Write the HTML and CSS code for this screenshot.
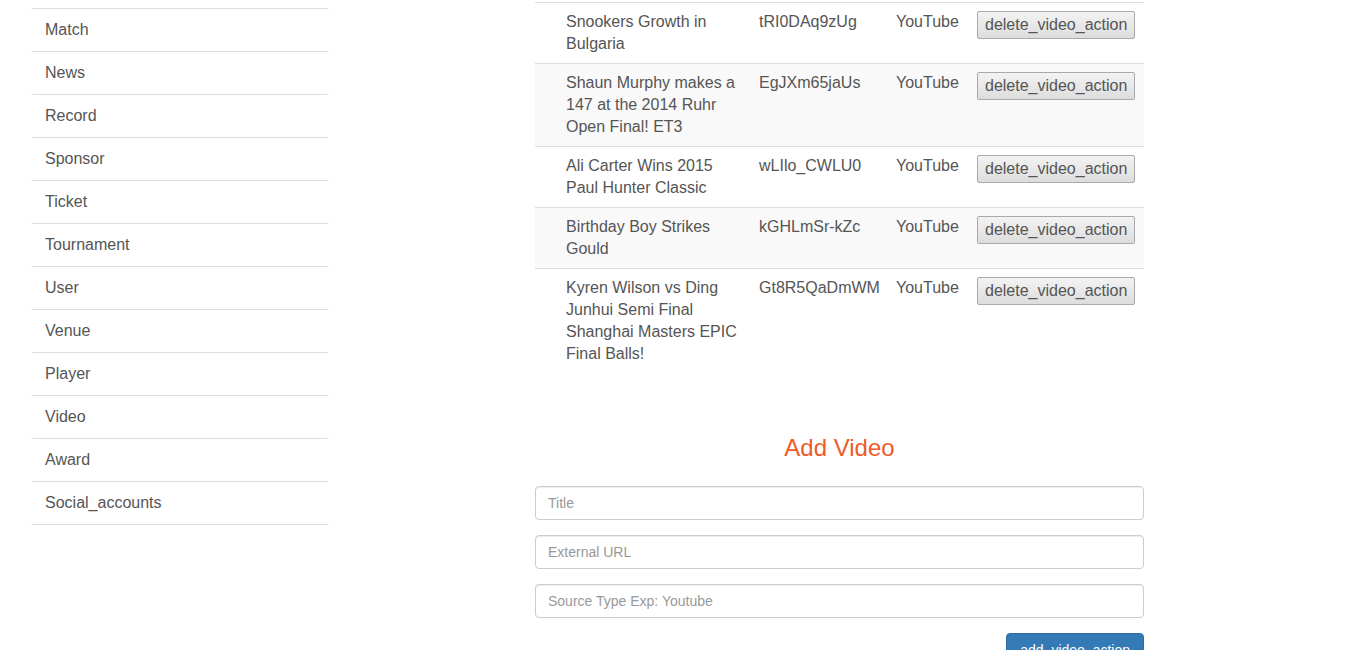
FILE: index.html
```html
<!DOCTYPE html>
<html>
<head>
<meta charset="utf-8">
<link rel="stylesheet" href="styles.css">
</head>
<body>
<div class="page">
  <aside class="sidebar">
    <ul class="nav-list">
      <li class="nav-item">Match</li>
      <li class="nav-item">News</li>
      <li class="nav-item">Record</li>
      <li class="nav-item">Sponsor</li>
      <li class="nav-item">Ticket</li>
      <li class="nav-item">Tournament</li>
      <li class="nav-item">User</li>
      <li class="nav-item">Venue</li>
      <li class="nav-item">Player</li>
      <li class="nav-item">Video</li>
      <li class="nav-item">Award</li>
      <li class="nav-item">Social_accounts</li>
    </ul>
  </aside>
  <main class="content">
    <table class="video-table">
      <colgroup>
        <col class="c-id"><col class="c-title"><col class="c-ext"><col class="c-src"><col class="c-act">
      </colgroup>
      <tbody>
        <tr>
          <td></td>
          <td>Snookers Growth in Bulgaria</td>
          <td>tRI0DAq9zUg</td>
          <td>YouTube</td>
          <td><button class="btn-delete">delete_video_action</button></td>
        </tr>
        <tr class="striped">
          <td></td>
          <td>Shaun Murphy makes a 147 at the 2014 Ruhr Open Final! ET3</td>
          <td>EgJXm65jaUs</td>
          <td>YouTube</td>
          <td><button class="btn-delete">delete_video_action</button></td>
        </tr>
        <tr>
          <td></td>
          <td>Ali Carter Wins 2015 Paul Hunter Classic</td>
          <td>wLIlo_CWLU0</td>
          <td>YouTube</td>
          <td><button class="btn-delete">delete_video_action</button></td>
        </tr>
        <tr class="striped">
          <td></td>
          <td>Birthday Boy Strikes Gould</td>
          <td>kGHLmSr-kZc</td>
          <td>YouTube</td>
          <td><button class="btn-delete">delete_video_action</button></td>
        </tr>
        <tr>
          <td></td>
          <td>Kyren Wilson vs Ding Junhui Semi Final Shanghai Masters EPIC Final Balls!</td>
          <td>Gt8R5QaDmWM</td>
          <td>YouTube</td>
          <td><button class="btn-delete">delete_video_action</button></td>
        </tr>
      </tbody>
    </table>

    <h3 class="form-title">Add Video</h3>
    <form class="add-form">
      <input class="field" type="text" placeholder="Title">
      <input class="field" type="text" placeholder="External URL">
      <input class="field" type="text" placeholder="Source Type Exp: Youtube">
      <div class="actions">
        <button type="button" class="btn-primary">add_video_action</button>
      </div>
    </form>
  </main>
</div>
</body>
</html>
```

FILE: styles.css
```css
* { box-sizing: border-box; }

html, body {
  margin: 0;
  padding: 0;
  background: #fff;
  font-family: "Liberation Sans", Arial, sans-serif;
  color: #555;
  overflow: hidden;
}

.page {
  display: flex;
  align-items: flex-start;
  padding-left: 31px;
}

.sidebar {
  width: 298px;
  flex: 0 0 298px;
  padding-top: 8px;
}

.nav-list {
  list-style: none;
  margin: 0;
  padding: 0;
  border-top: 1px solid #ddd;
  border-radius: 3px;
}

.nav-item {
  padding: 10px 14px;
  font-size: 16px;
  line-height: 22px;
  color: #555;
  border-bottom: 1px solid #ddd;
  border-radius: 3px;
}

.content {
  margin-left: 206px;
  width: 609px;
  flex: 0 0 609px;
  padding-top: 2px;
}

.video-table {
  width: 609px;
  border-collapse: collapse;
  table-layout: fixed;
  border-top: 1px solid #ddd;
}

.c-id { width: 23px; }
.c-title { width: 193px; }
.c-ext { width: 137px; }
.c-src { width: 81px; }
.c-act { width: 175px; }

.video-table td {
  padding: 8px;
  vertical-align: top;
  font-size: 16px;
  line-height: 22px;
  color: #555;
  border-top: 1px solid #ddd;
  white-space: normal;
}

.video-table tr:first-child td { border-top: none; }

.video-table tr.striped td { background: #f9f9f9; }

.video-table td:nth-child(3) { white-space: nowrap; }

.btn-delete {
  display: inline-block;
  font-family: "Liberation Sans", Arial, sans-serif;
  font-size: 16px;
  line-height: 18px;
  padding: 4px 7px;
  color: #555;
  background: linear-gradient(#f3f3f3, #dddddd);
  border: 1px solid #a9a9a9;
  border-radius: 2px;
  margin: 0;
  vertical-align: top;
}

.form-title {
  margin: 62px 0 25px;
  text-align: center;
  font-size: 24px;
  line-height: 26px;
  font-weight: normal;
  color: #ee5a29;
}

.add-form {
  display: flex;
  flex-direction: column;
  gap: 15px;
}

.field {
  display: block;
  width: 100%;
  height: 34px;
  padding: 6px 12px;
  font-family: "Liberation Sans", Arial, sans-serif;
  font-size: 14px;
  line-height: 20px;
  color: #555;
  background: #fff;
  border: 1px solid #ccc;
  border-radius: 4px;
  box-shadow: inset 0 1px 1px rgba(0,0,0,0.075);
  margin: 0;
}

.field::placeholder { color: #999; }

.actions {
  display: flex;
  justify-content: flex-end;
}

.btn-primary {
  font-family: "Liberation Sans", Arial, sans-serif;
  font-size: 14px;
  line-height: 20px;
  padding: 6px 13px;
  color: #fff;
  background: #337ab7;
  border: 1px solid #2e6da4;
  border-radius: 4px;
  margin: 0;
}
```
